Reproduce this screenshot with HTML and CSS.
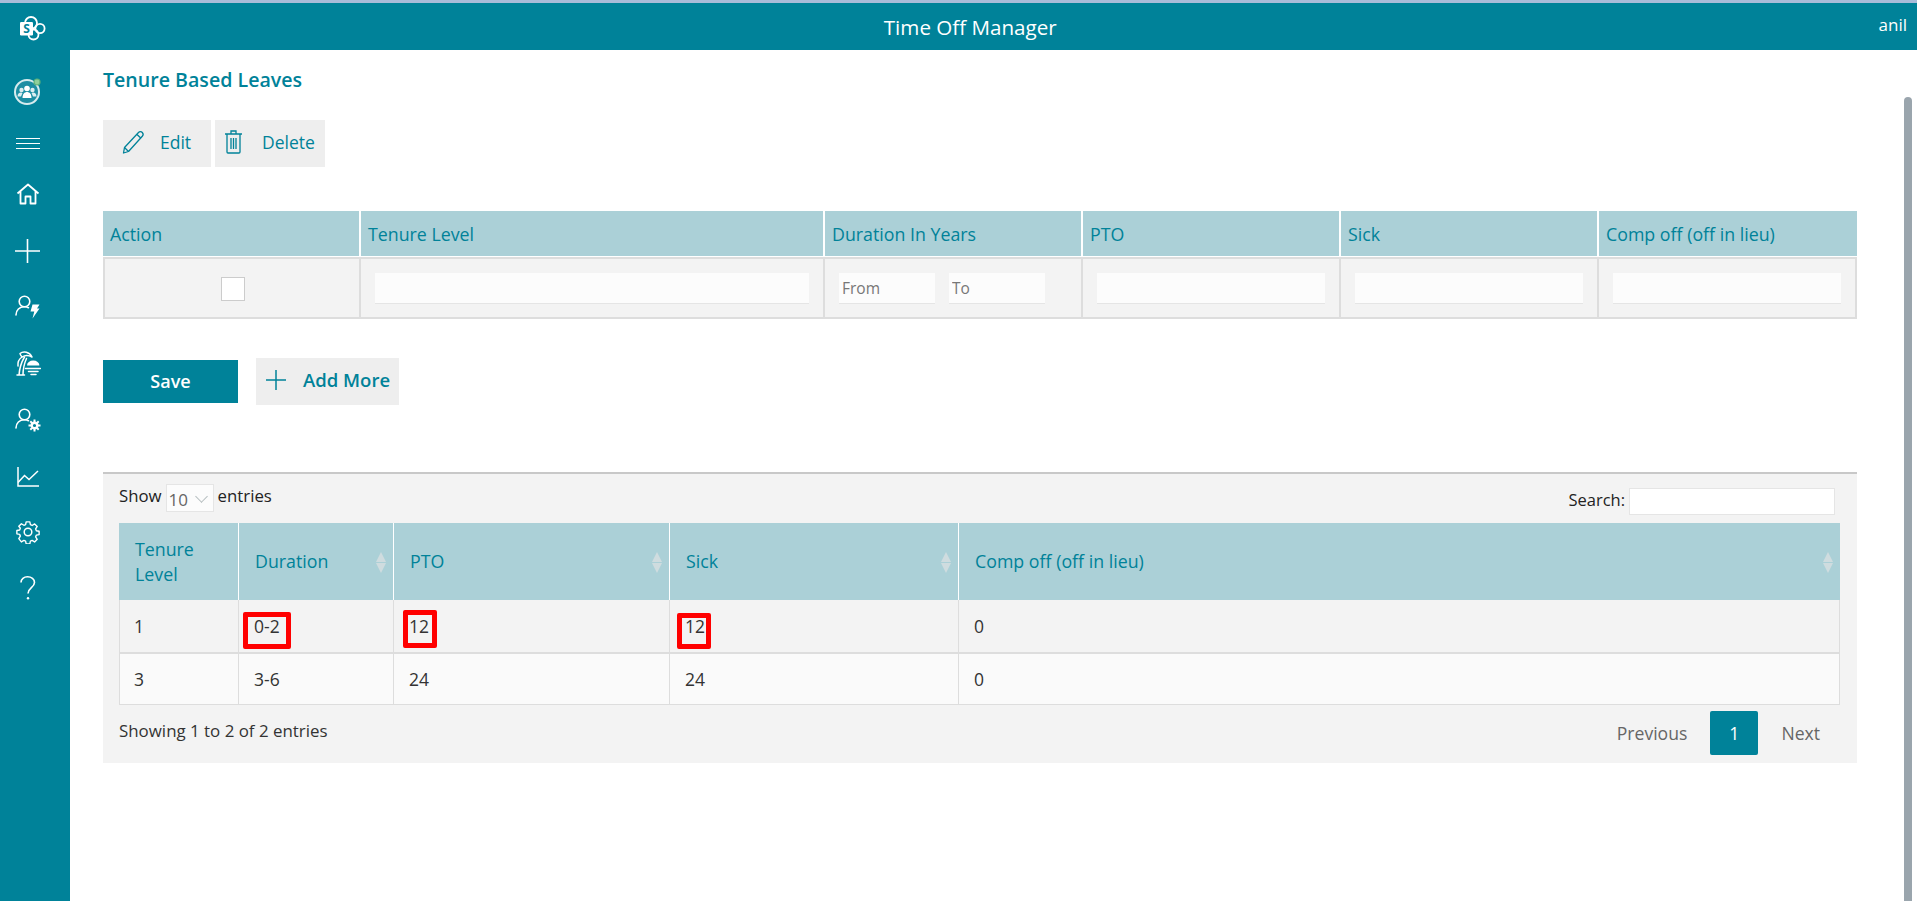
FILE: index.html
```html
<!DOCTYPE html>
<html lang="en">
  <head>
    <meta charset="UTF-8" />
    <meta name="viewport" content="width=device-width, initial-scale=1.0" />
    <title>Time Off Manager</title>
    <link rel="stylesheet" href="styles.css">
  </head>
  <body>
    <!-- top bar -->
    <header class="topbar">
      <svg class="logo" width="26" height="26" viewBox="0 0 26 26">
        <g fill="none" stroke="#fff" stroke-width="1.800">
          <circle cx="11" cy="7" r="6" />
          <circle cx="20" cy="12.500" r="4.600" />
          <circle cx="13.500" cy="18.500" r="5" />
        </g>
        <rect x="0" y="6" width="13" height="13.500" rx="1.200" fill="#fff" />
        <text x="6.500" y="17" class="logo-letter">S</text>
      </svg>
      <div class="app-title">Time Off Manager</div>
      <div class="user-name">anil</div>
    </header>

    <div class="layout">
      <!-- left menu -->
      <nav class="sidebar">
        <svg width="30" height="28" viewBox="0 0 30 28">
          <circle cx="14" cy="15" r="12" fill="#1d8ea3" stroke="#d6ebee" stroke-width="2" />
          <circle cx="14" cy="11.500" r="2.800" fill="#fff" />
          <circle cx="8.500" cy="13" r="2.200" fill="#dceef1" />
          <circle cx="19.500" cy="13" r="2.200" fill="#dceef1" />
          <path d="M9.500 21c0-4 2-6 4.500-6s4.500 2 4.500 6z" fill="#fff" />
          <path d="M4.500 19.500c0-2.500 1.500-4 3.500-4l1.500.5-1.500 3.500zM23.500 19.500c0-2.500-1.500-4-3.500-4l-1.500.5 1.500 3.500z" fill="#dceef1" />
          <circle cx="24" cy="5" r="3" fill="#8fcf9a" stroke="#5fb27a" stroke-width="1.200" />
        </svg>
        <svg width="24" height="11" viewBox="0 0 24 11" fill="none" stroke="#fff" stroke-width="1">
          <path d="M0 .5h24M0 5.500h24M0 10.500h24" />
        </svg>
        <svg class="down-1" width="24" height="22" viewBox="0 0 24 22" fill="none" stroke="#fff" stroke-width="1.800" stroke-linejoin="round">
          <path d="M1.500 10.500 12 1.500l10.500 9M4.500 8.500V20.500h5v-7h5v7h5V8.500" />
        </svg>
        <svg class="down-1" width="26" height="24" viewBox="0 0 26 24" fill="none" stroke="#fff" stroke-width="1.600">
          <path d="M0 12h25M12.500 0v24" />
        </svg>
        <svg class="up-1" width="26" height="24" viewBox="0 0 26 24" fill="none" stroke="#fff" stroke-width="1.600">
          <circle cx="9.500" cy="6.500" r="5.300" />
          <path d="M1 20c0-5 3.500-8.200 8.500-8.200 1.500 0 2.800.3 4 .9" stroke-linecap="round" />
          <path d="M17.500 9.500h7l-2.500 4h2.500l-7 10 1.800-7H15.500z" fill="#fff" stroke="none" />
        </svg>
        <svg class="up-1" width="26" height="25" viewBox="0 0 26 25" fill="none" stroke="#fff" stroke-width="1.500" stroke-linecap="round" stroke-linejoin="round">
          <path d="M5 2.500C8.500-.5 14.500.8 17 6c-3-1.800-7-2-10 0C5.800 4.500 5 3.500 5 2.500z" />
          <path d="M7 6C4 8 2.500 11 3 15" />
          <path d="M9.500 6C6.500 11 4.500 17 4 24M11.500 7.500C9.500 12 8 17 8 24M2 24h7.500" />
          <path d="M12 14.500a6.200 5 0 0 1 12.400 0z" fill="#fff" stroke="none" />
          <path d="M10.500 17.500h15M13.500 20.500h9.500M16 23.500h5" />
        </svg>
        <svg class="up-1" width="26" height="24" viewBox="0 0 26 24" fill="none" stroke="#fff" stroke-width="1.600">
          <circle cx="9.500" cy="6.500" r="5.300" />
          <path d="M1 20c0-5 3.500-8.200 8.500-8.200 1.500 0 2.800.3 4 .9" stroke-linecap="round" />
          <circle cx="19.500" cy="17.500" r="2.800" stroke-width="2.400" />
          <path d="M19.500 11.500v2.500M19.500 21v2.500M13.500 17.500H16M23 17.500h2.500M15.300 13.300l1.800 1.800M21.900 19.900l1.800 1.800M15.300 21.700l1.800-1.800M21.900 15.100l1.800-1.800" stroke-width="2" />
        </svg>
        <svg class="down-2" width="22" height="20" viewBox="0 0 22 20" fill="none" stroke="#fff" stroke-width="1.500">
          <path d="M1 0v19h21" />
          <path d="M1 15.500 7.500 8.500l4.500 4L21 4" />
        </svg>
        <svg width="24" height="24" viewBox="0 0 24 24" fill="none" stroke="#fff" stroke-width="1.500" stroke-linejoin="round">
          <circle cx="12" cy="12" r="3.800" />
          <path d="M10 1h4l.6 3.100 1.900.8L19.200 3.200 22 6l-1.700 2.700.8 1.900 3 .6v3.600l-3 .6-.8 1.900 1.700 2.700-2.800 2.800-2.700-1.700-1.900.8-.6 3h-4l-.6-3-1.900-.8-2.700 1.700L2 19.200l1.700-2.700-.8-1.900-3-.6v-3.600l3-.6.8-1.900L2 5.800 4.800 3l2.700 1.700 1.900-.8z" transform="translate(12 12) scale(.92) translate(-12 -12)" />
        </svg>
        <svg class="up-1" width="16" height="24" viewBox="0 0 16 24" fill="none" stroke="#fff" stroke-width="1.600">
          <path d="M1 6.500C1 3 4 .8 7.500.8c4 0 7 2.500 7 5.700 0 5-6.500 5.500-6.500 11" />
          <circle cx="8" cy="22.300" r="1.200" fill="#fff" stroke="none" />
        </svg>
      </nav>

      <main class="content">
        <h1 class="page-title">Tenure Based Leaves</h1>

        <div class="toolbar">
          <button class="tool-btn edit-btn">
            <svg width="24" height="24" viewBox="0 0 24 24" fill="none" stroke="#008299" stroke-width="1.300" stroke-linejoin="round">
              <path d="M2.500 17.500 16.500 2.500a2.600 2.600 0 0 1 3.800 0 2.800 2.800 0 0 1 0 3.800L6.500 21.500 1.500 23z" />
              <path d="M2.500 17.500l4 4M15 4.500l4 3.800" />
            </svg>
            Edit
          </button>
          <button class="tool-btn delete-btn">
            <svg width="20" height="24" viewBox="0 0 20 24" fill="none" stroke="#008299" stroke-width="1.300">
              <path d="M1 4h17M7 4V1h5v3M3 4v18a1 1 0 0 0 1 1h11a1 1 0 0 0 1-1V4" />
              <path d="M7 8v11M9.500 8v11M12 8v11" />
            </svg>
            Delete
          </button>
        </div>

        <!-- add form -->
        <table class="form-table">
          <colgroup>
            <col class="col-258" /><col class="col-464" /><col class="col-258" /><col class="col-258" /><col class="col-258" /><col class="col-258" />
          </colgroup>
          <thead>
            <tr>
              <th>Action</th>
              <th>Tenure Level</th>
              <th>Duration In Years</th>
              <th>PTO</th>
              <th>Sick</th>
              <th>Comp off (off in lieu)</th>
            </tr>
          </thead>
          <tbody>
            <tr>
              <td class="center"><input type="checkbox" class="check" /></td>
              <td><input type="text" class="field" /></td>
              <td>
                <div class="range">
                  <input type="text" class="field" placeholder="From" />
                  <input type="text" class="field" placeholder="To" />
                </div>
              </td>
              <td><input type="text" class="field" /></td>
              <td><input type="text" class="field" /></td>
              <td><input type="text" class="field" /></td>
            </tr>
          </tbody>
        </table>

        <div class="form-actions">
          <button class="save-btn">Save</button>
          <button class="tool-btn add-btn">
            <svg width="20" height="20" viewBox="0 0 20 20" fill="none" stroke="#008299" stroke-width="1.500">
              <path d="M0 10h20M10 0v20" />
            </svg>
            Add More
          </button>
        </div>

        <!-- list of levels -->
        <section class="list-panel">
          <div class="list-top">
            <div class="length">
              Show
              <span class="select-wrap">
                <select class="length-select"><option>10</option><option>25</option></select>
              </span>
              entries
            </div>
            <label class="search">Search:<input type="text" class="search-input" /></label>
          </div>

          <table class="data-table">
            <colgroup>
              <col class="col-120" /><col class="col-155" /><col class="col-276" /><col class="col-288" /><col />
            </colgroup>
            <thead>
              <tr>
                <th>Tenure<br />Level</th>
                <th class="sortable">Duration</th>
                <th class="sortable">PTO</th>
                <th class="sortable">Sick</th>
                <th class="sortable">Comp off (off in lieu)</th>
              </tr>
            </thead>
            <tbody>
              <tr class="odd">
                <td>1</td>
                <td class="marked">0-2<span class="red-box box-range"></span></td>
                <td class="marked">12<span class="red-box box-pto"></span></td>
                <td class="marked">12<span class="red-box box-sick"></span></td>
                <td>0</td>
              </tr>
              <tr>
                <td>3</td>
                <td>3-6</td>
                <td>24</td>
                <td>24</td>
                <td>0</td>
              </tr>
            </tbody>
          </table>

          <div class="list-bottom">
            <div class="info">Showing 1 to 2 of 2 entries</div>
            <div class="pager">
              <a class="page-link">Previous</a>
              <a class="page-current">1</a>
              <a class="page-link">Next</a>
            </div>
          </div>
        </section>
      </main>

      <div class="scrollbar"></div>
    </div>
  </body>
</html>
```

FILE: styles.css
```css
/* page */
html,
body {
  height: 100%;
}

body {
  margin: 0;
  display: flex;
  flex-direction: column;
  overflow: hidden;
  font-family: "Open Sans", "Noto Sans", sans-serif;
  font-size: 16.8px;
  color: #333;
  background-color: #fff;
  border-top: 3px solid #a9bcd9;
  box-sizing: border-box;
}

/* top bar */
.topbar {
  flex: none;
  height: 47px;
  display: flex;
  align-items: center;
  background-color: #008299;
  color: #fff;
  padding: 0 10px 0 20px;
}

.logo {
  flex: none;
  margin-top: 5px;
}

.logo-letter {
  font-family: "Open Sans", sans-serif;
  font-size: 12px;
  font-weight: 700;
  fill: #008299;
  text-anchor: middle;
}

.app-title {
  flex: 1;
  padding-left: 16px;
  text-align: center;
  font-size: 20.6px;
}

.user-name {
  flex: none;
  font-size: 17px;
  margin-top: -4px;
}

.layout {
  flex: 1;
  display: flex;
  min-height: 0;
}

/* left menu */
.sidebar {
  flex: none;
  width: 70px;
  box-sizing: border-box;
  display: flex;
  flex-direction: column;
  align-items: center;
  gap: 33px;
  padding: 27px 14px 0 0;
  background-color: #008299;
}

.sidebar svg {
  flex: none;
}

.sidebar .down-1 {
  margin-top: 1px;
}

.sidebar .down-2 {
  margin-top: 2px;
}

.sidebar .up-1 {
  margin-top: -1px;
}

/* content */
.content {
  flex: 1;
  min-width: 0;
  padding: 17px 47px 0 33px;
}

.page-title {
  margin: 0 0 27px;
  font-size: 19.6px;
  line-height: 26px;
  font-weight: 600;
  color: #008299;
}

.toolbar {
  display: flex;
  gap: 4px;
  margin-bottom: 44px;
}

button {
  font-family: inherit;
  border: none;
  cursor: pointer;
}

.tool-btn {
  height: 47px;
  display: flex;
  align-items: center;
  background-color: #eee;
  color: #008299;
  font-size: 17.5px;
  padding: 0 0 4px;
}

.edit-btn {
  width: 108px;
  padding-left: 19px;
  gap: 14px;
}

.delete-btn {
  width: 110px;
  padding-left: 9px;
  gap: 18px;
}

.add-btn {
  width: 143px;
  padding-left: 10px;
  gap: 17px;
  font-weight: 600;
  font-size: 18.5px;
  white-space: nowrap;
}

/* add form */
table {
  table-layout: fixed;
  border-collapse: separate;
  border-spacing: 0;
}

.form-table {
  width: 1754px;
}

.col-258 {
  width: 258px;
}

.col-464 {
  width: 464px;
}

.form-table th {
  height: 45px;
  padding: 0 7px;
  text-align: left;
  font-size: 17.8px;
  font-weight: 400;
  color: #008299;
  background-color: #abd0d7;
  border-right: 2px solid #fff;
  border-bottom: 1px solid #fff;
  white-space: nowrap;
}

.form-table th:last-child {
  border-right: none;
}

.form-table td {
  height: 58px;
  padding: 0 14px;
  background-color: #f3f3f3;
  border-right: 2px solid #ddd;
  border-top: 2px solid #ddd;
  border-bottom: 2px solid #ddd;
}

.form-table td:first-child {
  border-left: 2px solid #ddd;
}

.center {
  text-align: center;
}

.check {
  appearance: none;
  display: inline-block;
  vertical-align: middle;
  width: 24px;
  height: 24px;
  margin: 0 0 0 1px;
  background-color: #fff;
  border: 1px solid #ccc;
}

.field {
  display: block;
  width: 100%;
  height: 31px;
  box-sizing: border-box;
  padding: 0 3px;
  border: none;
  border-bottom: 1px solid #e5e5e5;
  background-color: #fcfcfc;
  font-family: inherit;
  font-size: 15.5px;
}

.field::placeholder {
  color: #777;
}

.range {
  display: flex;
  gap: 14px;
}

.range .field {
  flex: none;
  width: 96px;
}

.form-actions {
  display: flex;
  align-items: center;
  gap: 18px;
  margin-top: 39px;
  margin-bottom: 67px;
}

.save-btn {
  width: 135px;
  height: 43px;
  padding: 0 0 2px;
  background-color: #008299;
  color: #fff;
  font-size: 18px;
  font-weight: 600;
}

/* list of levels */
.list-panel {
  height: 291px;
  box-sizing: border-box;
  padding: 9px 17px 0 16px;
  background-color: #f3f3f3;
  border-top: 2px solid #c8c8c8;
}

.list-top {
  height: 40px;
  display: flex;
  justify-content: space-between;
  color: #222;
}

.length {
  display: flex;
  align-items: flex-start;
  gap: 4px;
  line-height: 24px;
  margin-top: 1px;
}

.select-wrap {
  position: relative;
  display: block;
  width: 48px;
  height: 28px;
}

.select-wrap::after {
  content: "";
  position: absolute;
  top: 8px;
  right: 8px;
  width: 8px;
  height: 8px;
  border-right: 1px solid #b5bdbf;
  border-bottom: 1px solid #b5bdbf;
  transform: rotate(45deg);
}

.length-select {
  appearance: none;
  width: 100%;
  height: 100%;
  padding: 3px 0 0 2px;
  border: 1px solid #e5e5e5;
  background-color: #fcfcfc;
  color: #666;
  font-family: inherit;
  font-size: 17px;
}

.search {
  display: flex;
  gap: 4px;
  margin: 5px 5px 0 0;
  line-height: 24px;
  font-size: 16.5px;
}

.search-input {
  width: 206px;
  height: 27px;
  box-sizing: border-box;
  border: 1px solid #e5e5e5;
  background-color: #fff;
}

.data-table {
  width: 1721px;
}

.col-120 {
  width: 120px;
}

.col-155 {
  width: 155px;
}

.col-276 {
  width: 276px;
}

.col-288 {
  width: 289px;
}

.data-table th {
  position: relative;
  height: 77px;
  padding: 0 16px;
  box-sizing: border-box;
  text-align: left;
  font-size: 17.8px;
  line-height: 25px;
  font-weight: 400;
  color: #008299;
  background-color: #abd0d7;
  border-right: 1px solid #fff;
}

.data-table th:last-child {
  border-right: none;
}

/* sort arrows */
.sortable::before,
.sortable::after {
  content: "";
  position: absolute;
  right: 7px;
  border-left: 5.5px solid transparent;
  border-right: 5.5px solid transparent;
}

.sortable::before {
  top: 29px;
  border-bottom: 10px solid #cfdcdf;
}

.sortable::after {
  top: 40px;
  border-top: 10px solid #cfdcdf;
}

.data-table td {
  position: relative;
  height: 51px;
  padding: 0 15px;
  box-sizing: border-box;
  background-color: #fafafa;
  border-right: 1px solid #ddd;
  border-bottom: 1px solid #ddd;
  font-size: 17.5px;
}

.data-table td:first-child {
  border-left: 1px solid #ddd;
  padding-left: 14px;
}

.data-table .odd td {
  height: 54px;
  background-color: #f3f3f3;
  border-bottom: 2px solid #ddd;
}

/* red markers drawn over the screenshot */
.red-box {
  position: absolute;
  box-sizing: border-box;
  border: 5px solid #f00;
  border-radius: 2px;
}

.box-range {
  left: 4px;
  top: 12px;
  width: 48px;
  height: 37px;
}

.box-pto {
  left: 9px;
  top: 10px;
  width: 34px;
  height: 38px;
}

.box-sick {
  left: 7px;
  top: 13px;
  width: 34px;
  height: 36px;
}

.list-bottom {
  display: flex;
  justify-content: space-between;
  padding-top: 6px;
}

.info {
  padding-top: 8px;
  line-height: 24px;
  color: #333;
  font-size: 16.9px;
}

.pager {
  display: flex;
  align-items: center;
  gap: 23px;
  padding-right: 20px;
  color: #666;
  font-size: 17.6px;
}

.page-current {
  width: 48px;
  height: 44px;
  line-height: 44px;
  text-align: center;
  border-radius: 2px;
  background-color: #008299;
  color: #fff;
}

/* scrollbar */
.scrollbar {
  flex: none;
  width: 8px;
  margin: 47px 5px 0 0;
  border-radius: 4px 4px 0 0;
  background-color: #9aa5ad;
}
```
